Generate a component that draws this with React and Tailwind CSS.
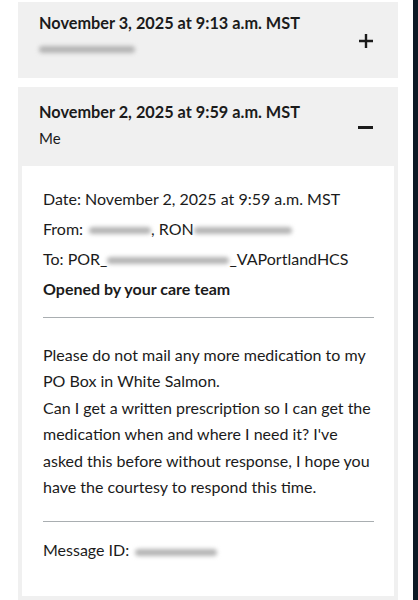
import React from "react";

const Blur = ({ w, className = "" }) => (
  <span
    className={`inline-block h-[7px] rounded-full bg-[#b4b4b4] blur-[2px] align-middle ${className}`}
    style={{ width: w }}
  />
);

export default function App() {
  const font = { fontFamily: "Lato, 'Noto Sans', sans-serif" };
  return (
    <div className="flex h-[600px] w-[418px] overflow-hidden bg-white text-[#1b1b1b]" style={font}>
      <div className="flex w-[413px] flex-col pl-[18px] pr-[15px] pt-[2px]">
        {/* Card 1 */}
        <div className="flex h-[76px] items-start justify-between bg-[#f0f0f0] pl-[21px] pr-[25px] pt-[10px]">
          <div className="flex flex-col">
            <div className="text-[16.3px] font-bold leading-[22px]">November 3, 2025 at 9:13 a.m. MST</div>
            <div className="mt-[4px] h-[22px] flex items-center">
              <Blur w={96} />
            </div>
          </div>
          <svg width="14" height="14" viewBox="0 0 14 14" className="mt-[22px]">
            <path d="M7 0v14M0 7h14" stroke="#1b1b1b" strokeWidth="2.4" />
          </svg>
        </div>

        {/* Card 2 */}
        <div className="mt-[9px] flex flex-1 flex-col bg-[#f0f0f0] px-[4px] pb-[4px]">
          <div className="flex items-start justify-between pl-[17px] pr-[21px] pt-[14px]">
            <div className="flex flex-col">
              <div className="text-[16.3px] font-bold leading-[22px]">November 2, 2025 at 9:59 a.m. MST</div>
              <div className="mt-[4px] text-[15px] leading-[22px]">Me</div>
            </div>
            <svg width="15" height="3" viewBox="0 0 15 3" className="mt-[25px]">
              <rect width="15" height="3" fill="#1b1b1b" />
            </svg>
          </div>
          <div className="mt-[17px] flex flex-1 flex-col bg-white pl-[21px] pr-[20px] pt-[18px] text-[16px]">
            <div className="leading-[30px]">Date: November 2, 2025 at 9:59 a.m. MST</div>
            <div className="leading-[30px]">
              From:<Blur w={62} className="ml-[6px]" />, RON<Blur w={98} />
            </div>
            <div className="leading-[30px]">
              To: POR_<Blur w={122} />_VAPortlandHCS
            </div>
            <div className="font-bold leading-[30px]">Opened by your care team</div>
            <div className="mt-[13px] h-px bg-[#a9aeb1]" />
            <div className="mt-[24px] leading-[26.4px]">
              Please do not mail any more medication to my PO Box in White Salmon.
              <br />
              Can I get a written prescription so I can get the medication when and where I need it? I've asked this
              before without response, I hope you have the courtesy to respond this time.
            </div>
            <div className="mt-[21px] h-px bg-[#a9aeb1]" />
            <div className="mt-[15px] leading-[26px]">
              Message ID:<Blur w={82} className="ml-[6px]" />
            </div>
          </div>
        </div>
      </div>
      <div className="w-[5px] bg-[#0d1a26]" />
    </div>
  );
}
